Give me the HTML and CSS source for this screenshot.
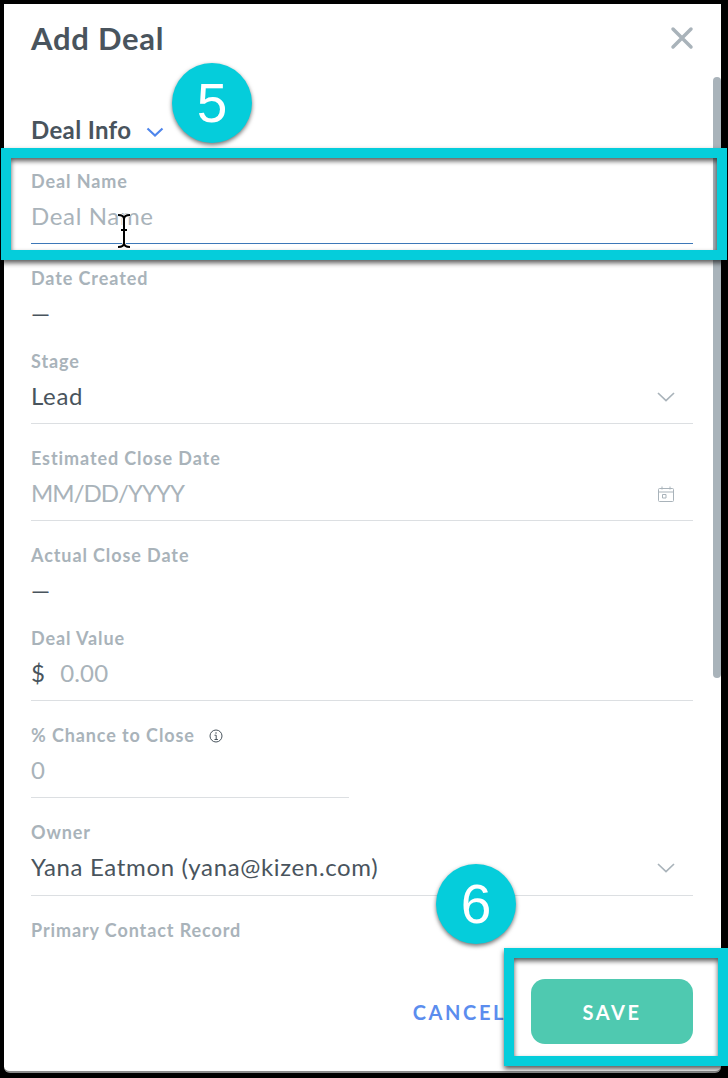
FILE: index.html
```html
<!DOCTYPE html>
<html lang="en">
<head>
    <meta charset="UTF-8">
    <meta name="viewport" content="width=device-width, initial-scale=1.0">
    <title>Add Deal</title>
    <link rel="stylesheet" href="styles.css">
</head>
<body>
    <div class="modal">
        <header class="modal-head">
            <h1>Add Deal</h1>
            <svg class="close" width="24" height="24" viewBox="0 0 24 24"><path d="M3 3l18 18M21 3L3 21"/></svg>
        </header>

        <div class="modal-body">
            <h2 class="section">Deal Info
                <svg width="18" height="10" viewBox="0 0 18 10"><path d="M1.500 1.500L9 8.500l7.500-7"/></svg>
            </h2>

            <div class="field active">
                <label>Deal Name</label>
                <div class="value empty">Deal Name</div>
            </div>
            <div class="field static">
                <label>Date Created</label>
                <div class="value">—</div>
            </div>
            <div class="field">
                <label>Stage</label>
                <div class="value">Lead
                    <svg class="chevron" width="18" height="10" viewBox="0 0 18 10"><path d="M1 1l8 7.500 8-7.500"/></svg>
                </div>
            </div>
            <div class="field">
                <label>Estimated Close Date</label>
                <div class="value empty date-mask">MM/DD/YYYY
                    <svg class="calendar" width="18" height="18" viewBox="0 0 18 18"><path d="M2.500 3.500h13a1 1 0 0 1 1 1v11a1 1 0 0 1-1 1h-13a1 1 0 0 1-1-1v-11a1 1 0 0 1 1-1zM1.500 7h15M5 1.500v3M13 1.500v3M5.500 9.500h3.500v3.500h-3.500z"/></svg>
                </div>
            </div>
            <div class="field static">
                <label>Actual Close Date</label>
                <div class="value">—</div>
            </div>
            <div class="field">
                <label>Deal Value</label>
                <div class="value money"><span class="currency">$</span><span class="empty">0.00</span></div>
            </div>
            <div class="field short">
                <label>% Chance to Close
                    <svg class="info" width="14" height="14" viewBox="0 0 14 14"><circle cx="7" cy="7" r="6"/><path d="M5.500 6.200H7.200V10.500M5.500 10.500h3.400M7 3.200v1.600"/></svg>
                </label>
                <div class="value empty">0</div>
            </div>
            <div class="field owner">
                <label>Owner</label>
                <div class="value">Yana Eatmon (yana@kizen.com)
                    <svg class="chevron" width="18" height="10" viewBox="0 0 18 10"><path d="M1 1l8 7.500 8-7.500"/></svg>
                </div>
            </div>
            <div class="field static">
                <label>Primary Contact Record</label>
            </div>
        </div>

        <footer class="modal-foot">
            <button class="btn-cancel">CANCEL</button>
            <button class="btn-save">SAVE</button>
        </footer>
        <div class="scrollbar"></div>
    </div>

    <!-- tutorial annotations on top of the screenshot -->
    <div class="highlight highlight-name"></div>
    <div class="highlight highlight-save"></div>
    <div class="badge badge-5">5</div>
    <div class="badge badge-6">6</div>
    <svg class="cursor" width="16" height="36" viewBox="0 0 16 36">
        <path class="cursor-halo" d="M2 2c3 0 6 1 6 4v24c0 3-3 4-6 4M14 2c-3 0-6 1-6 4v24c0 3 3 4 6 4M5 17h6"/>
        <path d="M2 2c3 0 6 1 6 4v24c0 3-3 4-6 4M14 2c-3 0-6 1-6 4v24c0 3 3 4 6 4M5 17h6"/>
    </svg>
</body>
</html>
```

FILE: styles.css
```css
* {
    box-sizing: border-box;
    margin: 0;
    padding: 0;
}

html, body {
    height: 100%;
    overflow: hidden;
}

body {
    background-color: #000;
    font-family: Lato, "Open Sans", sans-serif;
    color: #49545d;
    padding: 4px 7px 5px 4px;
}

.modal {
    height: 100%;
    background-color: #fff;
    border-radius: 0 0 6px 6px;
    border-bottom: 2px solid #8c8c8c;
    display: flex;
    flex-direction: column;
    overflow: hidden;
    position: relative;
}

.modal-head {
    display: flex;
    align-items: center;
    justify-content: space-between;
    padding: 15px 27px 0 27px;
}

.modal-head h1 {
    font-size: 31px;
    line-height: 38px;
    font-weight: 700;
    letter-spacing: 0.75px;
}

.close {
    fill: none;
    stroke: #a9b3ba;
    stroke-width: 3.500;
    stroke-linecap: round;
}

.modal-body {
    flex: 1;
    padding: 0 28px 0 27px;
    overflow: hidden;
}

.section {
    display: flex;
    align-items: center;
    gap: 15px;
    font-size: 24px;
    line-height: 30px;
    font-weight: 700;
    letter-spacing: 0.35px;
    height: 30px;
    margin: 58px 0 2px;
}

.section svg {
    fill: none;
    stroke: #4f86ec;
    stroke-width: 2.200;
    margin-top: 3px;
}

.field {
    padding-top: 23px;
}

.field label {
    display: flex;
    align-items: center;
    font-size: 18px;
    line-height: 22px;
    font-weight: 700;
    letter-spacing: 0.9px;
    color: #a9b3ba;
}

.field .value {
    display: flex;
    align-items: center;
    justify-content: space-between;
    height: 52px;
    padding: 9px 0 12px;
    font-size: 24px;
    line-height: 30px;
    letter-spacing: 0.65px;
    border-bottom: 1px solid #dcdfe2;
}

.field.static .value {
    height: 38px;
    padding: 10px 0 0;
    border-bottom: 0;
}

.field.active .value {
    border-bottom-color: #3d78b8;
}

.field.short .value {
    width: 318px;
}

.field.owner .value {
    height: 53px;
    padding-bottom: 13px;
}

.field .value.date-mask {
    letter-spacing: -0.95px;
}

.field .value.money {
    justify-content: flex-start;
    letter-spacing: 0.2px;
}

.empty {
    color: #a9b3ba;
}

.currency {
    margin-right: 15px;
}

.chevron {
    fill: none;
    stroke: #a9b3ba;
    stroke-width: 1.700;
    margin: 1px 18px 0 0;
}

.calendar {
    fill: none;
    stroke: #a9b3ba;
    stroke-width: 1;
    margin: 2px 18px 0 0;
}

.info {
    fill: none;
    stroke: #49545d;
    stroke-width: 1;
    margin: 2px 0 0 14px;
}

.modal-foot {
    display: flex;
    align-items: center;
    justify-content: flex-end;
    gap: 25px;
    padding: 0 28px 27px 0;
}

.modal-foot button {
    border: 0;
    font-family: Lato, sans-serif;
    font-weight: 700;
    font-size: 20px;
    letter-spacing: 2.600px;
}

.btn-cancel {
    background: none;
    color: #5b8dee;
}

.btn-save {
    width: 162px;
    height: 65px;
    border-radius: 14px;
    background-color: #4fc9b0;
    color: #fff;
}

.scrollbar {
    position: absolute;
    top: 73px;
    right: 0;
    width: 8px;
    height: 601px;
    border-radius: 4px;
    background-color: #a9b3ba;
}

.highlight {
    position: absolute;
    border: 10px solid #05cddb;
    box-shadow: 0 3px 5px rgba(0, 0, 0, 0.65), inset 0 3px 5px rgba(0, 0, 0, 0.65);
}

.highlight-name {
    left: 1px;
    top: 148px;
    width: 726px;
    height: 112px;
}

.highlight-save {
    left: 504px;
    top: 948px;
    width: 224px;
    height: 118px;
}

.badge {
    position: absolute;
    width: 80px;
    height: 80px;
    border-radius: 50%;
    background-color: #05cddb;
    box-shadow: 0 2px 4px rgba(0, 0, 0, 0.55);
    color: #fff;
    font-family: "Liberation Sans", Arial, sans-serif;
    font-size: 55px;
    line-height: 80px;
    text-align: center;
}

.badge-5 {
    left: 172px;
    top: 63px;
}

.badge-6 {
    left: 436px;
    top: 864px;
}

.cursor {
    position: absolute;
    left: 116px;
    top: 213px;
    fill: none;
    stroke: #000;
    stroke-width: 2;
}

.cursor .cursor-halo {
    stroke: #fff;
    stroke-width: 3.500;
}
```
